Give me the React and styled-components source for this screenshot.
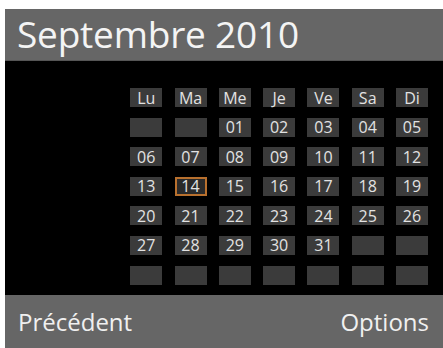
import styled, { createGlobalStyle } from 'styled-components';

const GlobalStyle = createGlobalStyle`
  html, body {
    margin: 0;
    padding: 0;
    background: #ffffff;
    width: 443px;
    height: 348px;
    overflow: hidden;
  }
`;

const days = ['Lu', 'Ma', 'Me', 'Je', 'Ve', 'Sa', 'Di'];
const weeks = [
  ['', '', '01', '02', '03', '04', '05'],
  ['06', '07', '08', '09', '10', '11', '12'],
  ['13', '14', '15', '16', '17', '18', '19'],
  ['20', '21', '22', '23', '24', '25', '26'],
  ['27', '28', '29', '30', '31', '', ''],
  ['', '', '', '', '', '', ''],
];

function App() {
  const cells = [...days, ...weeks.flat()];
  return (
    <>
      <GlobalStyle />
      <Page>
        <Screen>
          <Header>Septembre 2010</Header>
          <Body>
            <Grid>
              {cells.map((label, index) => (
                <Cell key={index} $selected={label === '14'}>
                  {label}
                </Cell>
              ))}
            </Grid>
          </Body>
          <Footer>
            <span>Précédent</span>
            <span>Options</span>
          </Footer>
        </Screen>
      </Page>
    </>
  );
}

export default App;

const Page = styled.div`
  box-sizing: border-box;
  width: 443px;
  height: 348px;
  padding: 9px 0 0 5px;
  font-family: 'Open Sans', 'Noto Sans', sans-serif;
`;

const Screen = styled.div`
  display: flex;
  flex-direction: column;
  width: 438px;
  height: 339px;
`;

const Header = styled.div`
  box-sizing: border-box;
  height: 52px;
  background: #666666;
  border-bottom: 1px solid #555555;
  color: #f4f4f4;
  font-size: 37px;
  line-height: 50px;
  padding-left: 12px;
  letter-spacing: -0.2px;
`;

const Body = styled.div`
  flex: 1;
  background: #000000;
  display: flex;
  justify-content: flex-end;
  padding: 27px 15px 0 0;
`;

const Grid = styled.div`
  display: grid;
  grid-template-columns: repeat(7, 32px);
  grid-auto-rows: 19px;
  column-gap: 12.3px;
  row-gap: 10.6px;
  align-content: start;
`;

const Cell = styled.div`
  box-sizing: border-box;
  background: ${(p) => (p.$selected ? '#2a2a2a' : '#3b3b3b')};
  border: ${(p) => (p.$selected ? '2px solid #b8702e' : 'none')};
  color: #e2e2e2;
  font-size: 16px;
  display: flex;
  align-items: center;
  justify-content: center;
`;

const Footer = styled.div`
  height: 53px;
  background: #666666;
  color: #f0f0f0;
  font-size: 24px;
  display: flex;
  justify-content: space-between;
  align-items: center;
  padding: 0 14px 0 13px;
`;
